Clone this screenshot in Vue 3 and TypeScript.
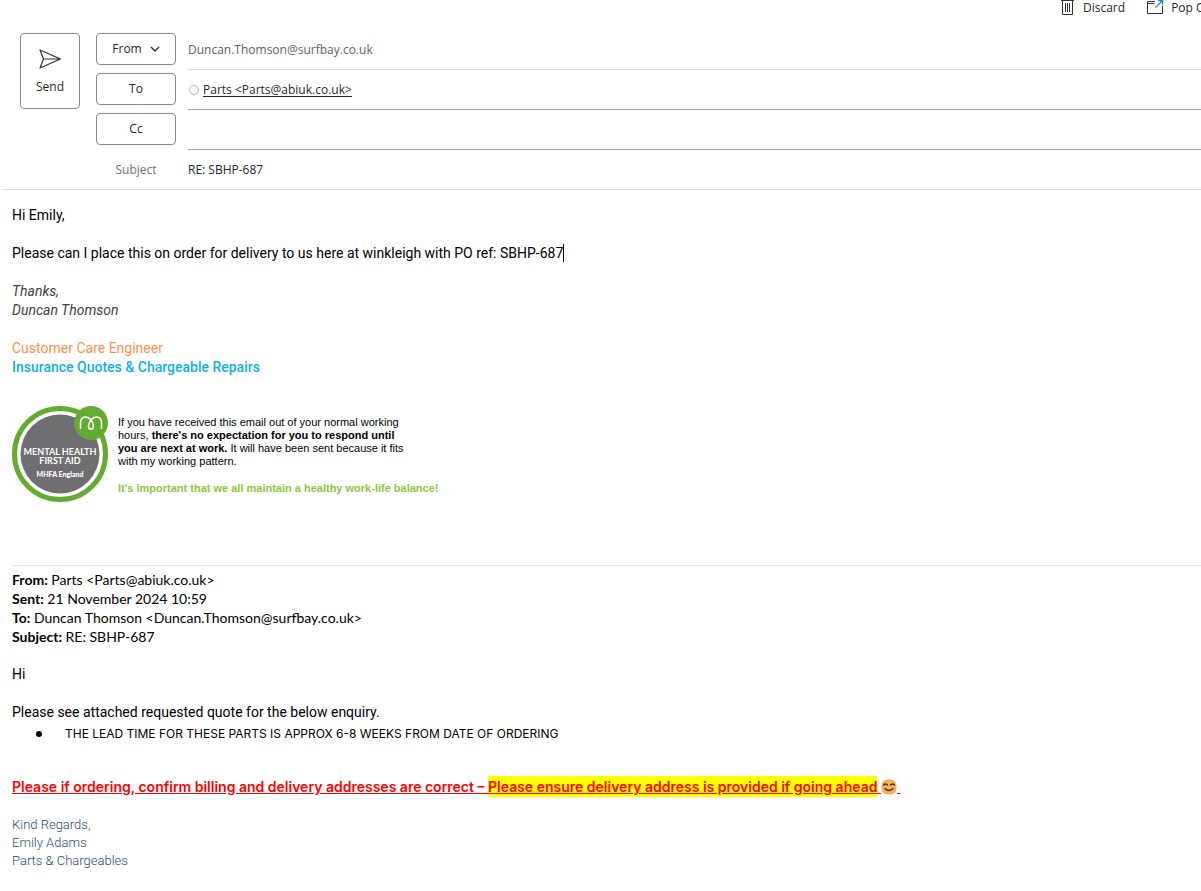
<script setup lang="ts">
import { ref } from 'vue'

interface HeaderLine {
  label: string
  value: string
}

const cc = ref('')
const subject = ref('RE: SBHP-687')

const quoted: HeaderLine[] = [
  { label: 'From:', value: 'Parts <Parts@abiuk.co.uk>' },
  { label: 'Sent:', value: '21 November 2024 10:59' },
  { label: 'To:', value: 'Duncan Thomson <Duncan.Thomson@surfbay.co.uk>' },
  { label: 'Subject:', value: 'RE: SBHP-687' },
]
</script>

<template>
  <div class="composer">
    <nav class="toolbar" aria-label="Message actions">
      <button type="button" class="tool">
        <svg width="16" height="16" viewBox="0 0 16 16" fill="none" stroke="#333" aria-hidden="true">
          <path d="M0 0.500h13M1.500 0.500v14h10v-14M4.500 3v9M6.500 3v9M8.500 3v9" />
        </svg>
        <span>Discard</span>
      </button>
      <button type="button" class="tool">
        <svg width="18" height="16" viewBox="0 0 18 16" fill="none" aria-hidden="true">
          <path d="M8 1.500H0.500v12h15V6M0.500 3.500h7" stroke="#333" />
          <path d="M8.500 7.500L16 0M11 0.500h4.500V5" stroke="#1e88d2" stroke-width="1.300" />
        </svg>
        <span>Pop Out</span>
      </button>
    </nav>

    <header class="envelope">
      <button type="button" class="send">
        <svg width="22" height="20" viewBox="0 0 22 20" fill="none" stroke="#333" stroke-width="1.200" stroke-linejoin="round" aria-hidden="true">
          <path d="M1 1l20.500 9L1 19l3.500-9zM4.500 10h17" />
        </svg>
        <span>Send</span>
      </button>

      <div class="rows">
        <div class="row">
          <button type="button" class="pick">
            From
            <svg width="10" height="6" viewBox="0 0 10 6" fill="none" stroke="#333" stroke-width="1.400" aria-hidden="true">
              <path d="M1 1l4 4 4-4" />
            </svg>
          </button>
          <div class="field light"><span class="sender">Duncan.Thomson@surfbay.co.uk</span></div>
        </div>
        <div class="row">
          <button type="button" class="pick">To</button>
          <div class="field">
            <span class="presence"></span>
            <a class="recipient" href="mailto:Parts@abiuk.co.uk">Parts &lt;Parts@abiuk.co.uk&gt;</a>
          </div>
        </div>
        <div class="row">
          <button id="cc-button" type="button" class="pick">Cc</button>
          <div class="field">
            <input v-model="cc" type="text" aria-labelledby="cc-button" />
          </div>
        </div>
        <div class="row subject">
          <label class="caption" for="subject">Subject</label>
          <div class="field">
            <input id="subject" v-model="subject" type="text" />
          </div>
        </div>
      </div>
    </header>

    <main class="message">
      <p>Hi Emily,</p>
      <p class="gap">Please can I place this on order for delivery to us here at winkleigh with PO ref: SBHP-687<span class="caret"></span></p>
      <p class="gap sign">Thanks,<br />Duncan Thomson</p>
      <p class="gap role">Customer Care Engineer</p>
      <p class="team">Insurance Quotes &amp; Chargeable Repairs</p>

      <section class="banner">
        <svg class="badge" width="96" height="98" viewBox="0 0 96 98" role="img" aria-label="Mental Health First Aid, MHFA England">
          <circle cx="48" cy="49" r="45.500" fill="#fff" stroke="#64ab32" stroke-width="5" />
          <circle cx="48" cy="49" r="39.500" fill="#6f6e70" />
          <circle cx="79" cy="18" r="17" fill="#64ab32" />
          <path
            d="M68.500 24v-6C68.500 11 75 11 78 14C83 19 82 24 79 24C76 24 75 19 80 14C83 11 89.500 11 89.500 18v6"
            fill="none"
            stroke="#fff"
            stroke-width="1.500"
          />
          <g fill="#fff" text-anchor="middle" font-weight="700">
            <text x="48" y="50" font-size="9">MENTAL HEALTH</text>
            <text x="48" y="59" font-size="9">FIRST AID</text>
            <text x="48" y="72" font-size="7" font-weight="900">MHFA England</text>
          </g>
        </svg>
        <div class="notice">
          <p>
            If you have received this email out of your normal working<br />
            hours, <b>there's no expectation for you to respond until<br />
            you are next at work.</b> It will have been sent because it fits<br />
            with my working pattern.
          </p>
          <p class="balance">It's important that we all maintain a healthy work-life balance!</p>
        </div>
      </section>

      <section class="quoted">
        <div class="origin">
          <p v-for="line in quoted" :key="line.label"><b>{{ line.label }}</b> {{ line.value }}</p>
        </div>
        <p class="gap">Hi</p>
        <p class="gap">Please see attached requested quote for the below enquiry.</p>
        <ul>
          <li>THE LEAD TIME FOR THESE PARTS IS APPROX 6-8 WEEKS FROM DATE OF ORDERING</li>
        </ul>
        <p class="warning">Please if ordering, confirm billing and delivery addresses are correct – <mark>Please ensure delivery address is provided if going ahead</mark>&nbsp;<svg class="emoji" width="16" height="16" viewBox="0 0 16 16" role="img" aria-label="Smiling face">
            <rect x="0.500" y="0.500" width="15" height="15" rx="6" fill="#f9b04f" />
            <path d="M2.500 6q2-2 4 0M9.500 6q2-2 4 0M4 9.500q4 4 8 0" fill="none" stroke="#4a2c3c" stroke-width="1.300" stroke-linecap="round" />
          </svg>&nbsp;</p>
        <p class="regards">Kind Regards,<br />Emily Adams<br />Parts &amp; Chargeables</p>
      </section>
    </main>
  </div>
</template>

<style>
body {
  margin: 0;
  background: #fff;
}
</style>

<style scoped>
.composer {
  overflow: hidden;
  color: #000;
  font: 12px/16px "Open Sans", "Noto Sans", sans-serif;
}
p {
  margin: 0;
}
button,
input {
  box-sizing: border-box;
  padding: 0;
  border: 0;
  background: none;
  color: #262626;
  font: inherit;
}
.toolbar {
  display: flex;
  justify-content: flex-end;
  gap: 22px;
  margin-right: -16px;
}
.tool {
  display: flex;
  align-items: center;
  gap: 6px;
  height: 16px;
}
.tool svg {
  flex: none;
}
.envelope {
  display: flex;
  align-items: flex-start;
  gap: 16px;
  margin: 14px 0 0 2px;
  padding-left: 18px;
  border-bottom: 1px solid #dcdcdc;
}
.send {
  display: flex;
  flex: none;
  flex-direction: column;
  align-items: center;
  justify-content: center;
  gap: 10px;
  width: 60px;
  height: 76px;
  margin-top: 3px;
  padding-top: 2px;
  border: 1px solid #8a8a8a;
  border-radius: 4px;
}
.rows {
  flex: 1;
  min-width: 0;
}
.row {
  display: flex;
  gap: 12px;
  height: 40px;
}
.pick,
.caption {
  flex: none;
  width: 80px;
  text-align: center;
}
.pick {
  display: flex;
  align-items: center;
  justify-content: center;
  gap: 8px;
  height: 32px;
  margin-top: 3px;
  border: 1px solid #8a8a8a;
  border-radius: 4px;
}
.caption {
  color: #707070;
}
.field {
  display: flex;
  flex: 1;
  align-items: center;
  border-bottom: 1px solid #a6a6a6;
}
.field.light {
  border-color: #dcdcdc;
}
.subject {
  align-items: center;
  height: 39px;
}
.subject .field {
  border: 0;
}
.field input {
  width: 100%;
  height: 32px;
  outline: 0;
}
.sender {
  color: #616161;
}
.presence {
  box-sizing: border-box;
  width: 10px;
  height: 10px;
  margin: 0 4px 0 1px;
  border: 1px solid #9fbccb;
  border-radius: 50%;
}
.recipient {
  color: #262626;
  text-underline-offset: 2px;
}
.message {
  padding: 16px 0 16px 12px;
  font: 14px/19px Roboto, sans-serif;
}
.gap {
  margin-top: 19px;
}
.caret {
  display: inline-block;
  width: 1px;
  height: 18px;
  background: #000;
  vertical-align: -4px;
}
.sign {
  color: #404040;
  font-style: italic;
}
.role {
  color: #ff8f4a;
}
.team {
  color: #12aeea;
  font-weight: 500;
}
.banner {
  display: flex;
  gap: 10px;
  margin-top: 28px;
}
.badge {
  flex: none;
  font-family: Lato, sans-serif;
}
.notice {
  padding-top: 11px;
  font: 11px/13px "Liberation Sans", Arial, sans-serif;
}
.balance {
  margin-top: 14px;
  color: #8cc63f;
  font-weight: 700;
}
.quoted {
  margin-top: 62px;
  padding-top: 4px;
  border-top: 1px solid #e1e1e1;
}
.origin {
  font-family: Lato, sans-serif;
}
ul {
  margin: 2px 0 0;
  padding: 0;
  font-family: Inter, sans-serif;
  font-size: 12px;
  list-style: none;
}
li {
  display: flex;
  align-items: center;
}
li::before {
  content: "";
  width: 6px;
  height: 6px;
  margin: 0 23px 0 24px;
  border-radius: 50%;
  background: #000;
}
.warning {
  margin-top: 34px;
  color: #f00;
  font-family: Inter, sans-serif;
  font-weight: 600;
  text-decoration: underline;
}
mark {
  padding: 2px 0;
  background: #ff0;
  color: inherit;
}
.emoji {
  vertical-align: -3px;
}
.regards {
  margin-top: 20px;
  color: #1f4e69;
  font-size: 13px;
  font-weight: 300;
  line-height: 18px;
}
</style>
